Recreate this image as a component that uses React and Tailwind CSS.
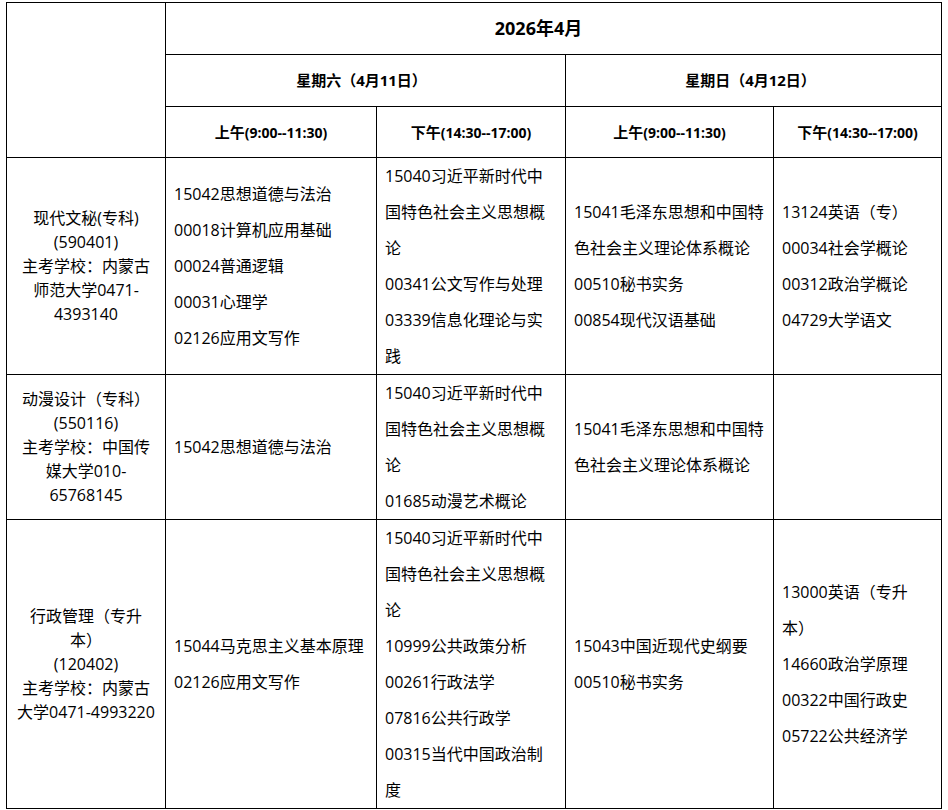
import React from "react";

const rows = [
  {
    major: ["现代文秘(专科)", "(590401)", "主考学校：内蒙古", "师范大学0471-", "4393140"],
    cells: [
      ["15042思想道德与法治", "00018计算机应用基础", "00024普通逻辑", "00031心理学", "02126应用文写作"],
      ["15040习近平新时代中", "国特色社会主义思想概", "论", "00341公文写作与处理", "03339信息化理论与实", "践"],
      ["15041毛泽东思想和中国特", "色社会主义理论体系概论", "00510秘书实务", "00854现代汉语基础"],
      ["13124英语（专）", "00034社会学概论", "00312政治学概论", "04729大学语文"],
    ],
  },
  {
    major: ["动漫设计（专科）", "(550116)", "主考学校：中国传", "媒大学010-", "65768145"],
    cells: [
      ["15042思想道德与法治"],
      ["15040习近平新时代中", "国特色社会主义思想概", "论", "01685动漫艺术概论"],
      ["15041毛泽东思想和中国特", "色社会主义理论体系概论"],
      [],
    ],
  },
  {
    major: ["行政管理（专升", "本）", "(120402)", "主考学校：内蒙古", "大学0471-4993220"],
    cells: [
      ["15044马克思主义基本原理", "02126应用文写作"],
      [
        "15040习近平新时代中",
        "国特色社会主义思想概",
        "论",
        "10999公共政策分析",
        "00261行政法学",
        "07816公共行政学",
        "00315当代中国政治制",
        "度",
      ],
      ["15043中国近现代史纲要", "00510秘书实务"],
      ["13000英语（专升", "本）", "14660政治学原理", "00322中国行政史", "05722公共经济学"],
    ],
  },
];

const HeadCell = ({ className = "", children }) => (
  <div className={`bg-white flex items-center justify-center font-bold ${className}`}>{children}</div>
);

const Slot = ({ am }) => (
  <HeadCell>
    <span className="text-[15px]">{am ? "上午" : "下午"}</span>
    <span className="text-[14px]">{am ? "(9:00--11:30)" : "(14:30--17:00)"}</span>
  </HeadCell>
);

export default function App() {
  return (
    <div className="min-h-screen bg-white pl-[6px] pt-[2px] text-black font-['Open_Sans','Noto_Sans_CJK_SC',sans-serif]">
      <div className="grid w-[936px] grid-cols-[158px_210px_188px_207px_167px] grid-rows-[51px_51px_50px_auto_auto_auto] gap-px border border-black bg-black">
        {/* header */}
        <div className="row-span-3 bg-white" />
        <HeadCell className="col-span-4 pr-[30px] text-[18px]">2026年4月</HeadCell>
        <HeadCell className="col-span-2 pr-[8px] text-[15px]">星期六（4月11日）</HeadCell>
        <HeadCell className="col-span-2 pr-[6px] text-[15px]">星期日（4月12日）</HeadCell>
        <Slot am />
        <Slot />
        <Slot am />
        <Slot />

        {/* body */}
        {rows.map((row, i) => (
          <React.Fragment key={i}>
            <div className="bg-white flex flex-col justify-center items-center px-2 text-[16px]">
              {row.major.map((line, j) => (
                <div key={j} className="h-6 leading-6 whitespace-nowrap text-center">
                  {line}
                </div>
              ))}
            </div>
            {row.cells.map((lines, k) => (
              <div key={k} className="bg-white flex flex-col justify-center px-2 text-[16px]">
                {lines.map((line, j) => (
                  <div key={j} className="h-9 leading-9 whitespace-nowrap">
                    {line}
                  </div>
                ))}
              </div>
            ))}
          </React.Fragment>
        ))}
      </div>
    </div>
  );
}
